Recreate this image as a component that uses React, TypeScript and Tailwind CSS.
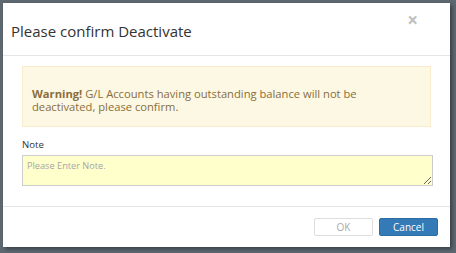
export default function App() {
  return (
    <div className="w-[456px] h-[253px] bg-[#5d6871] pt-[3px] pl-[3px] overflow-hidden" style={{ fontFamily: '"Open Sans", sans-serif' }}>
      <div className="w-[447px] h-[244px] bg-white flex flex-col shadow-[2px_2px_4px_rgba(0,0,0,0.4)]">
        {/* Header */}
        <div className="h-[53px] border-b border-[#e5e5e5] flex items-center pl-[8px] pr-[36px] relative">
          <h4 className="text-[15px] text-[#333] leading-none pt-[5px]">Please confirm Deactivate</h4>
          <span className="absolute right-[32px] top-[8px] text-[#c0c0c0] text-[19px] font-bold leading-none">×</span>
        </div>

        {/* Body */}
        <div className="px-[19px] pt-[10px] flex flex-col">
          <div className="h-[61px] bg-[#fcf8e3] border border-[#faebcc] text-[#8a6d3b] text-[11.2px] leading-[13px] px-[9px] pt-[20px]">
            <strong>Warning!</strong> G/L Accounts having outstanding balance will not be deactivated, please confirm.
          </div>
          <label className="text-[9.6px] font-medium text-[#333] mt-[13px] leading-none">Note</label>
          <textarea
            placeholder="Please Enter Note."
            className="mt-[5px] h-[31px] w-[411px] bg-[#ffffcc] border border-[#ccc] text-[9.2px] px-[4px] py-[3px] placeholder:text-[#a5a5a5] outline-none"
          />
        </div>

        {/* Footer */}
        <div className="mt-auto h-[41px] border-t border-[#e5e5e5] flex items-center justify-end gap-[6px] pr-[12px]">
          <button className="w-[59px] h-[18px] border border-[#ddd] rounded-[2px] bg-white text-[#aaa] text-[10px] leading-none">OK</button>
          <button className="w-[59px] h-[18px] rounded-[2px] bg-[#337ab7] border border-[#2e6da4] text-white text-[10px] leading-none">Cancel</button>
        </div>
      </div>
    </div>
  )
}
